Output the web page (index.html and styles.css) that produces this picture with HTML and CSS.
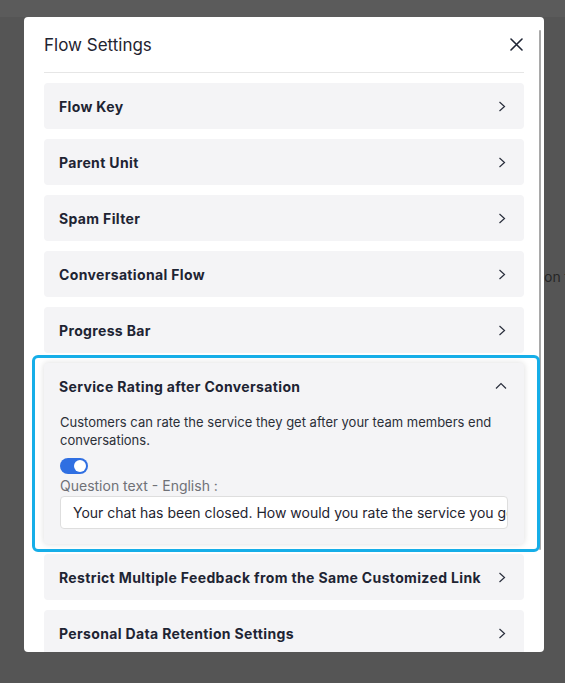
FILE: index.html
```html
<!DOCTYPE html>
<html>
<head>
<meta charset="utf-8">
<link rel="stylesheet" href="styles.css">
</head>
<body>
<div class="page">
  <div class="topbar"></div>
  <div class="backdrop">
    <p class="bg-text">on the page</p>
  </div>
</div>
<div class="modal">
  <div class="scrollbar"></div>
  <div class="modal-head">
    <h2 class="modal-title">Flow Settings</h2>
    <button class="close" aria-label="Close">
      <svg width="13" height="13" viewBox="0 0 13 13"><path d="M1 1L12 12M12 1L1 12" stroke="#1f2535" stroke-width="1.6" fill="none" stroke-linecap="round"/></svg>
    </button>
  </div>
  <div class="modal-body">
    <div class="card"><span class="card-title">Flow Key</span><svg class="chev" width="8" height="11" viewBox="0 0 8 11"><path d="M1.5 1L6.5 5.5L1.5 10" stroke="#2a2f3d" stroke-width="1.2" fill="none"/></svg></div>
    <div class="card"><span class="card-title">Parent Unit</span><svg class="chev" width="8" height="11" viewBox="0 0 8 11"><path d="M1.5 1L6.5 5.5L1.5 10" stroke="#2a2f3d" stroke-width="1.2" fill="none"/></svg></div>
    <div class="card"><span class="card-title">Spam Filter</span><svg class="chev" width="8" height="11" viewBox="0 0 8 11"><path d="M1.5 1L6.5 5.5L1.5 10" stroke="#2a2f3d" stroke-width="1.2" fill="none"/></svg></div>
    <div class="card"><span class="card-title">Conversational Flow</span><svg class="chev" width="8" height="11" viewBox="0 0 8 11"><path d="M1.5 1L6.5 5.5L1.5 10" stroke="#2a2f3d" stroke-width="1.2" fill="none"/></svg></div>
    <div class="card"><span class="card-title">Progress Bar</span><svg class="chev" width="8" height="11" viewBox="0 0 8 11"><path d="M1.5 1L6.5 5.5L1.5 10" stroke="#2a2f3d" stroke-width="1.2" fill="none"/></svg></div>
    <div class="card expanded">
      <div class="highlight"></div>
      <div class="card-head"><span class="card-title">Service Rating after Conversation</span><svg class="chev-up" width="12" height="8" viewBox="0 0 12 8"><path d="M1 6.5L6 1.5L11 6.5" stroke="#2a2f3d" stroke-width="1.2" fill="none"/></svg></div>
      <p class="desc">Customers can rate the service they get after your team members end conversations.</p>
      <div class="toggle"><span class="knob"></span></div>
      <label class="field-label">Question text - English :</label>
      <div class="input">Your chat has been closed. How would you rate the service you got?</div>
    </div>
    <div class="card"><span class="card-title">Restrict Multiple Feedback from the Same Customized Link</span><svg class="chev" width="8" height="11" viewBox="0 0 8 11"><path d="M1.5 1L6.5 5.5L1.5 10" stroke="#2a2f3d" stroke-width="1.2" fill="none"/></svg></div>
    <div class="card"><span class="card-title">Personal Data Retention Settings</span><svg class="chev" width="8" height="11" viewBox="0 0 8 11"><path d="M1.5 1L6.5 5.5L1.5 10" stroke="#2a2f3d" stroke-width="1.2" fill="none"/></svg></div>
  </div>
</div>
</body>
</html>
```
FILE: styles.css
```css
* { box-sizing: border-box; }
html, body { margin: 0; padding: 0; }
body {
  width: 565px;
  height: 683px;
  overflow: hidden;
  background: #565656;
  font-family: "Inter", "Noto Sans", sans-serif;
  position: relative;
}
.page { display: flex; flex-direction: column; height: 683px; }
.topbar { height: 17px; background: #5b5b5b; }
.backdrop {
  flex: 1;
  background: #555555;
  padding: 251px 0 0 544px;
  overflow: hidden;
}
.bg-text {
  margin: 0;
  font-size: 14px;
  line-height: 18px;
  color: #262626;
  white-space: nowrap;
}
.modal {
  position: absolute;
  left: 24px;
  top: 17px;
  width: 520px;
  height: 635px;
  background: #ffffff;
  border-radius: 4px;
  overflow: hidden;
}
.scrollbar {
  position: absolute;
  right: 3px;
  top: 13px;
  width: 2px;
  height: 520px;
  background: #a9a9a9;
  border-radius: 1px;
}
.modal-head {
  margin: 0 20px;
  height: 56px;
  border-bottom: 1px solid #e6e6e6;
  display: flex;
  align-items: center;
  justify-content: space-between;
}
.modal-title {
  margin: 0;
  font-size: 17px;
  font-weight: 400;
  color: #1f2430;
}
.close {
  border: 0; background: none; padding: 0; margin-right: 1px;
  display: flex;
}
.modal-body {
  padding: 10px 20px;
  display: flex;
  flex-direction: column;
  gap: 10px;
}
.card {
  background: #f4f4f6;
  border-radius: 4px;
  height: 46px;
  padding: 0 18px 0 15px;
  display: flex;
  align-items: center;
  justify-content: space-between;
  flex-shrink: 0;
}
.card-title {
  font-size: 14px;
  font-weight: 700;
  letter-spacing: 0.35px;
  color: #1e2433;
}
.expanded {
  position: relative;
  height: auto;
  display: block;
  padding: 13px 16px 15px 15px;
  box-shadow: 0 0 6px rgba(0,0,0,0.14);
}
.highlight {
  position: absolute;
  left: -12px; right: -16px; top: -8px; bottom: -8px;
  border: 3px solid #16aee8;
  border-radius: 6px;
  pointer-events: none;
}
.card-head {
  height: 20px;
  display: flex;
  align-items: center;
  justify-content: space-between;
  padding-right: 1px;
}
.desc {
  margin: 17px 0 0 1px;
  font-size: 13px;
  line-height: 18px;
  color: #2b2f38;
}
.toggle {
  margin: 9px 0 0 1px;
  width: 28px;
  height: 16px;
  border-radius: 8px;
  background: #2f6fe2;
  position: relative;
}
.knob {
  position: absolute;
  right: 2px; top: 2px;
  width: 12px; height: 12px;
  border-radius: 50%;
  background: #ffffff;
}
.field-label {
  display: block;
  margin: 3px 0 0 1px;
  font-size: 14px;
  line-height: 18px;
  color: #6f7177;
}
.input {
  margin: 1px 0 0 1px;
  height: 33px;
  background: #fff;
  border: 1px solid #dedede;
  border-radius: 4px;
  padding: 0 0 0 12px;
  font-size: 14px;
  line-height: 31px;
  color: #1f2430;
  white-space: nowrap;
  overflow: hidden;
}
```
